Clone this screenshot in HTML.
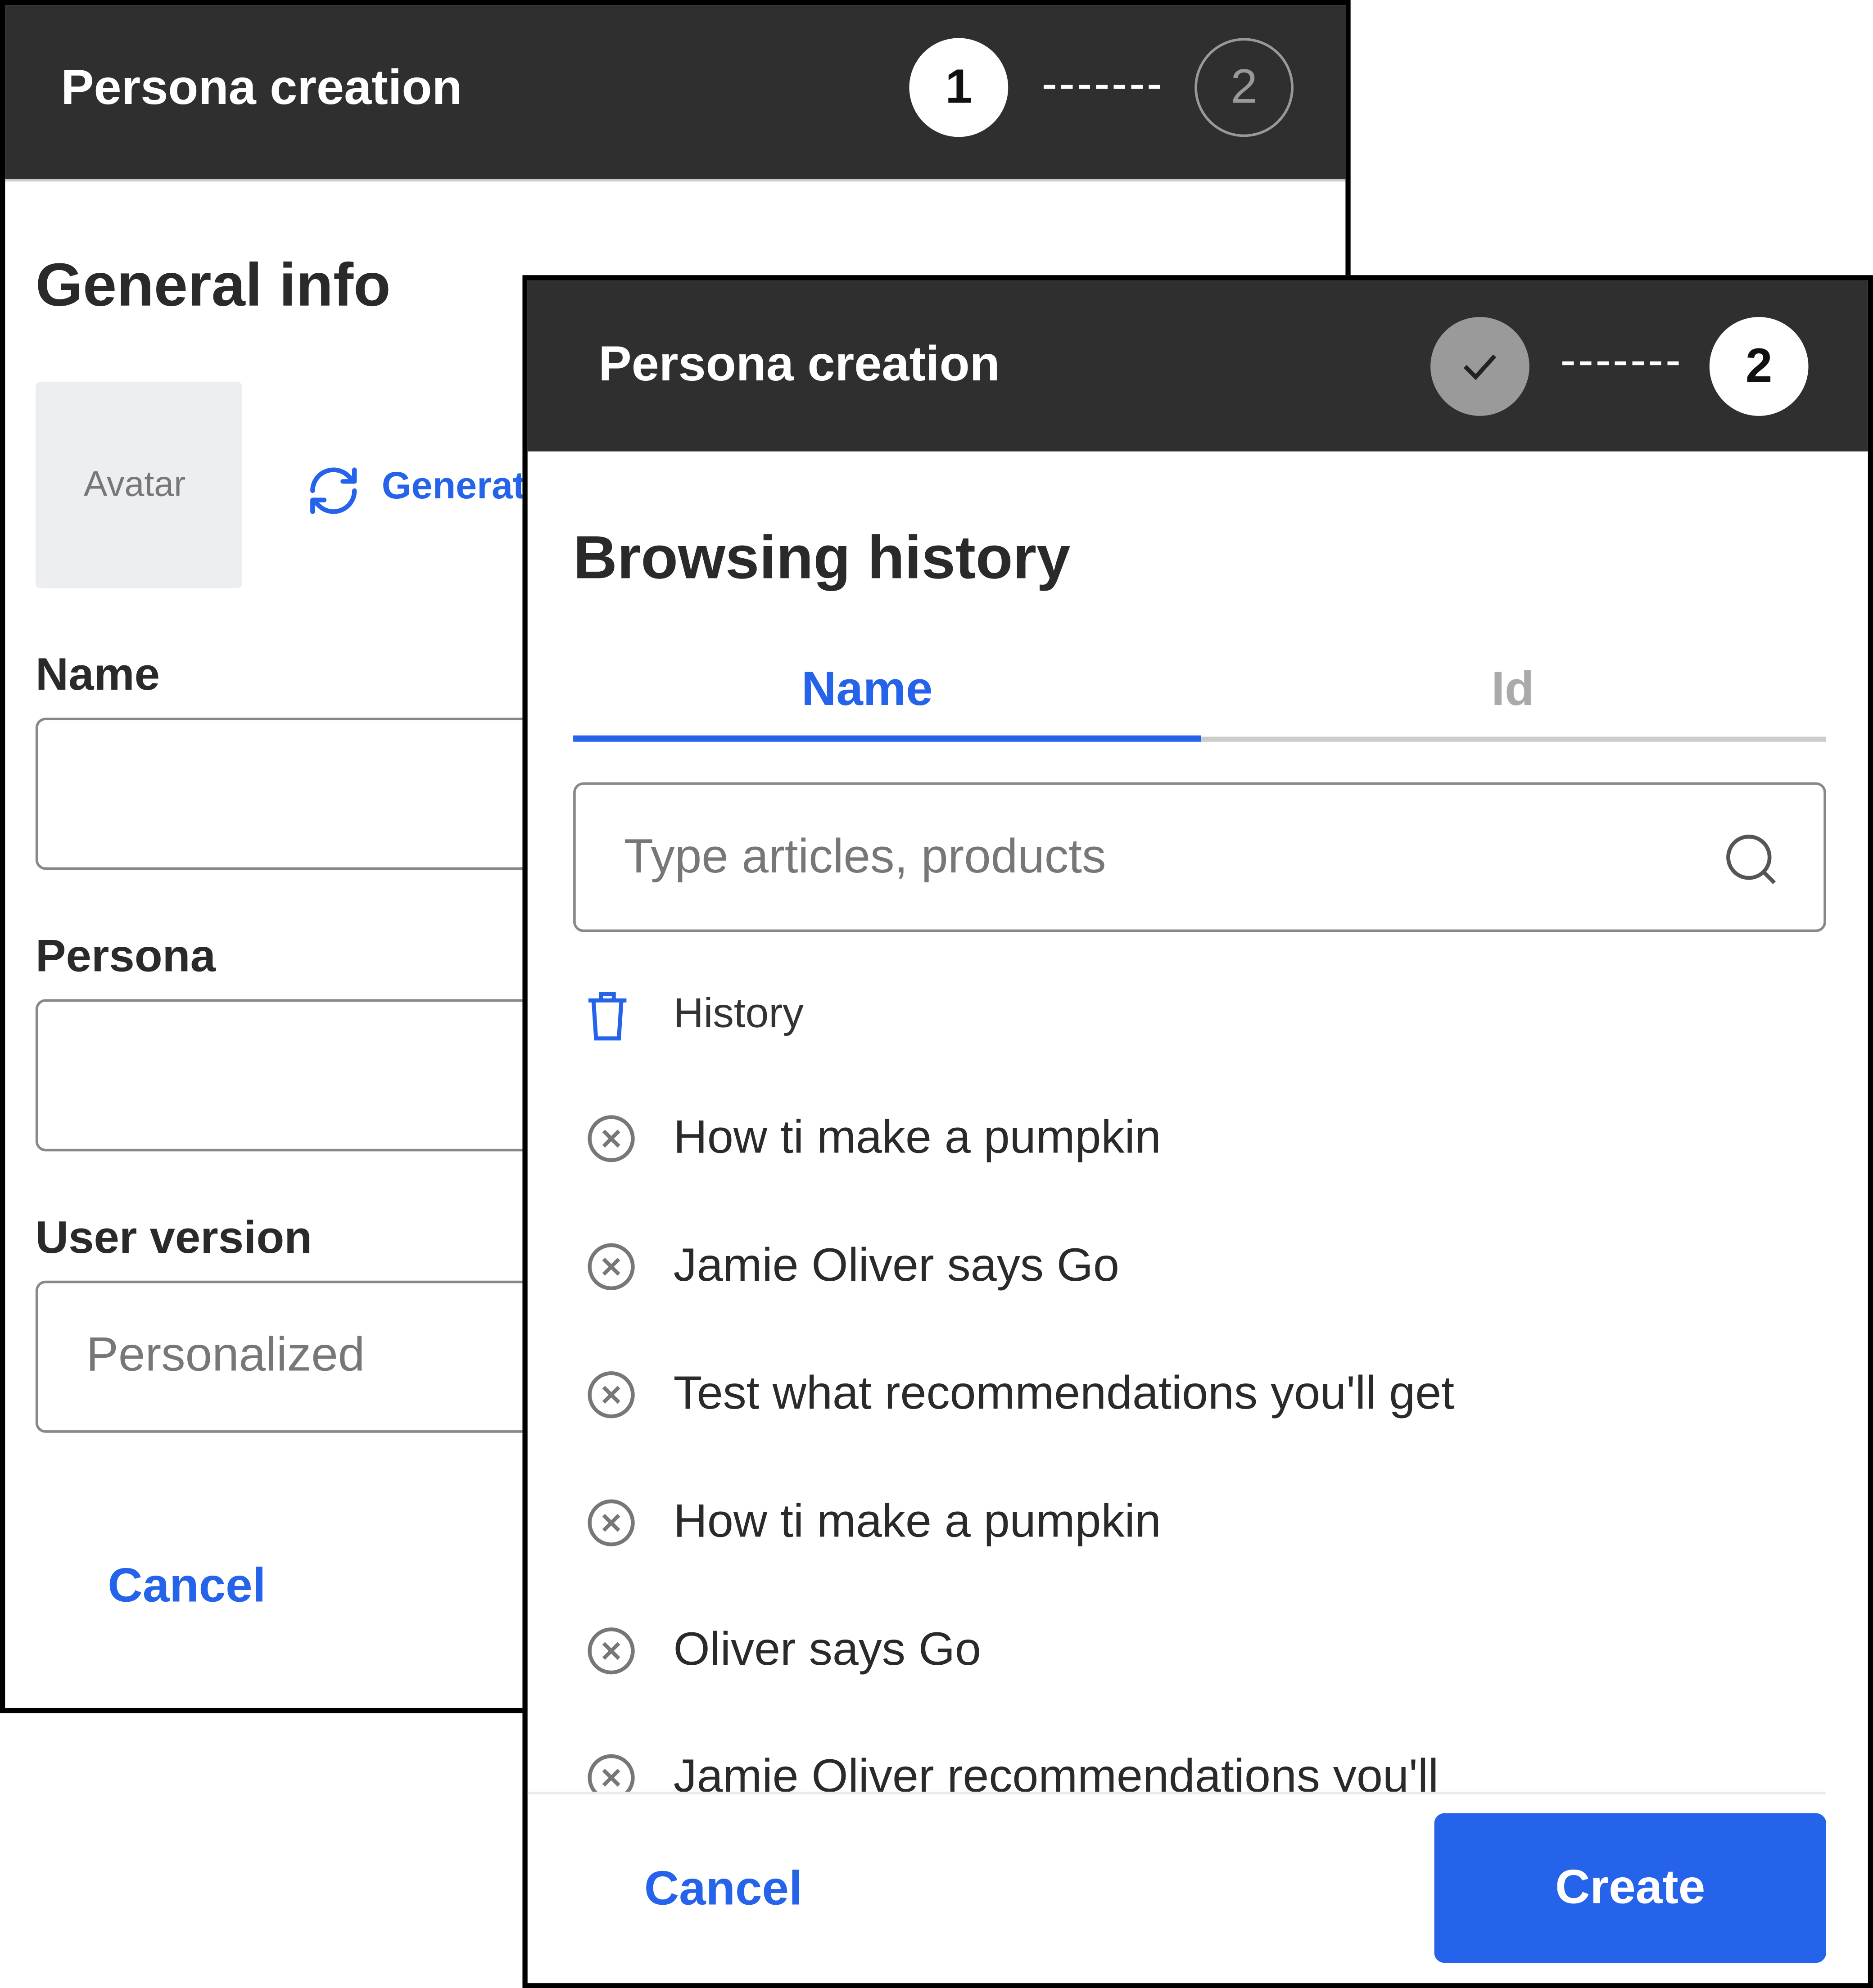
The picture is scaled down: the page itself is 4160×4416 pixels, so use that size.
<!DOCTYPE html>
<html><head><meta charset="utf-8"><style>
*{margin:0;padding:0;box-sizing:border-box}
html,body{width:4160px;height:4416px;background:#fff;overflow:hidden}
#s{position:absolute;left:0;top:0;width:1477px;height:1568px;transform:scale(2.8166);transform-origin:0 0;font-family:"Liberation Sans",Arial,sans-serif}
.a{position:absolute}
.card{position:absolute;border:4px solid #000;background:#fff;overflow:hidden}
.hd{position:absolute;left:0;top:0;right:0;background:#2f2f2f;border-bottom:2px solid #ccc}
.t{white-space:nowrap;line-height:1}
.ht{color:#fff;font-weight:bold;font-size:39px}
.circ{position:absolute;width:78px;height:78px;border-radius:50%;display:flex;align-items:center;justify-content:center;font-size:38px;font-weight:bold}
.dash{position:absolute;height:3px;width:92px;background:repeating-linear-gradient(90deg,#fff 0 9px,transparent 9px 13.8px)}
.lbl{font-size:36px;font-weight:bold;color:#2a2a2a}
.inp{position:absolute;border:2px solid #888;border-radius:8px;background:#fff}
.blue{color:#2563eb}
.it{font-size:37px;color:#2a2a2a}
</style></head><body><div id="s">
<div class="card" style="left:0;top:0;width:1065px;height:1351px">
 <div class="hd" style="height:139px">
  <div class="a t ht" style="left:44px;top:46px">Persona creation</div>
  <div class="circ" style="left:713px;top:26px;background:#fff;color:#111">1</div>
  <div class="dash" style="left:819px;top:63px"></div>
  <div class="circ" style="left:938px;top:26px;border:2px solid #999;color:#999;font-weight:normal">2</div>
 </div>
 <div class="a t" style="left:24px;top:198px;font-size:48px;font-weight:bold;color:#2a2a2a">General info</div>
 <div class="a" style="left:24px;top:297px;width:163px;height:163px;background:#eceef2;border-radius:4px"></div>
 <div class="a t" style="left:62px;top:364px;font-size:28px;color:#777">Avatar</div>
 <svg class="a" style="left:236px;top:361px" width="46" height="44" viewBox="0 0 24 24" fill="none" stroke="#2563eb" stroke-width="2" stroke-linecap="round" stroke-linejoin="round"><path d="M3 12a9 9 0 0 1 15.5-6.2L21 8M21 3v5h-5M21 12a9 9 0 0 1-15.5 6.2L3 16M3 21v-5h5"/></svg>
 <div class="a t blue" style="left:297px;top:365px;font-size:30px;font-weight:bold">Generate</div>
 <div class="a t lbl" style="left:24px;top:510px">Name</div>
 <div class="inp" style="left:24px;top:562px;width:600px;height:120px"></div>
 <div class="a t lbl" style="left:24px;top:732px">Persona</div>
 <div class="inp" style="left:24px;top:784px;width:600px;height:120px"></div>
 <div class="a t lbl" style="left:24px;top:954px">User version</div>
 <div class="inp" style="left:24px;top:1006px;width:600px;height:120px"></div>
 <div class="a t" style="left:64px;top:1046px;font-size:38px;color:#777">Personalized</div>
 <div class="a t blue" style="left:81px;top:1228px;font-size:38px;font-weight:bold">Cancel</div>
</div>
<div class="card" style="left:412px;top:217px;width:1065px;height:1351px">
 <div class="hd" style="height:135px;border-bottom:none">
  <div class="a t ht" style="left:56px;top:47px">Persona creation</div>
  <div class="circ" style="left:712px;top:29px;background:#9a9a9a"><svg width="40" height="40" viewBox="0 0 24 24" fill="none" stroke="#222" stroke-width="2"><path d="M5 12l5 5 9-10"/></svg></div>
  <div class="dash" style="left:816px;top:64px"></div>
  <div class="circ" style="left:932px;top:29px;background:#fff;color:#111">2</div>
 </div>
 <div class="a t" style="left:36px;top:196px;font-size:48px;font-weight:bold;color:#2a2a2a">Browsing history</div>
 <div class="a t blue" style="left:216px;top:304px;font-size:38px;font-weight:bold">Name</div>
 <div class="a t" style="left:760px;top:304px;font-size:38px;font-weight:bold;color:#aaa">Id</div>
 <div class="a" style="left:36px;top:359px;width:495px;height:5px;background:#2563eb"></div>
 <div class="a" style="left:531px;top:360px;width:493px;height:4px;background:#ccc"></div>
 <div class="inp" style="left:36px;top:396px;width:988px;height:118px"></div>
 <div class="a t" style="left:76px;top:436px;font-size:38px;color:#777">Type articles, products</div>
 <svg class="a" style="left:942px;top:434px" width="46" height="46" viewBox="0 0 24 24" fill="none" stroke="#555" stroke-width="1.6"><circle cx="11" cy="11" r="8.5"/><path d="M17 17l4.5 4.5"/></svg>
 <div class="a" style="left:0;top:540px;width:1057px;height:654px;overflow:hidden">
  <svg class="a" style="left:46px;top:20px" width="34" height="40" viewBox="0 0 17 20" fill="none" stroke="#2563eb" stroke-width="1.6"><path d="M1 4h15M6 4V1.5h5V4M3 4l1 15h9l1-15"/></svg>
  <div class="a t" style="left:115px;top:21px;font-size:33px;color:#333">History</div>
  <div class="a" style="left:0;top:117px">
   <svg class="a" style="left:46px;top:0" width="40" height="40" viewBox="0 0 20 20" fill="none" stroke="#777" stroke-width="1.5"><circle cx="10" cy="10" r="8.5"/><path d="M7 7l6 6M13 7l-6 6"/></svg>
   <div class="a t it" style="left:115px;top:0">How ti make a pumpkin</div></div>
  <div class="a" style="left:0;top:218px">
   <svg class="a" style="left:46px;top:0" width="40" height="40" viewBox="0 0 20 20" fill="none" stroke="#777" stroke-width="1.5"><circle cx="10" cy="10" r="8.5"/><path d="M7 7l6 6M13 7l-6 6"/></svg>
   <div class="a t it" style="left:115px;top:0">Jamie Oliver says Go</div></div>
  <div class="a" style="left:0;top:319px">
   <svg class="a" style="left:46px;top:0" width="40" height="40" viewBox="0 0 20 20" fill="none" stroke="#777" stroke-width="1.5"><circle cx="10" cy="10" r="8.5"/><path d="M7 7l6 6M13 7l-6 6"/></svg>
   <div class="a t it" style="left:115px;top:0">Test what recommendations you'll get</div></div>
  <div class="a" style="left:0;top:420px">
   <svg class="a" style="left:46px;top:0" width="40" height="40" viewBox="0 0 20 20" fill="none" stroke="#777" stroke-width="1.5"><circle cx="10" cy="10" r="8.5"/><path d="M7 7l6 6M13 7l-6 6"/></svg>
   <div class="a t it" style="left:115px;top:0">How ti make a pumpkin</div></div>
  <div class="a" style="left:0;top:521px">
   <svg class="a" style="left:46px;top:0" width="40" height="40" viewBox="0 0 20 20" fill="none" stroke="#777" stroke-width="1.5"><circle cx="10" cy="10" r="8.5"/><path d="M7 7l6 6M13 7l-6 6"/></svg>
   <div class="a t it" style="left:115px;top:0">Oliver says Go</div></div>
  <div class="a" style="left:0;top:621px">
   <svg class="a" style="left:46px;top:0" width="40" height="40" viewBox="0 0 20 20" fill="none" stroke="#777" stroke-width="1.5"><circle cx="10" cy="10" r="8.5"/><path d="M7 7l6 6M13 7l-6 6"/></svg>
   <div class="a t it" style="left:115px;top:0">Jamie Oliver recommendations you'll</div></div>
 </div>
 <div class="a" style="left:0;top:1192px;width:1024px;height:2px;background:#e8eaee"></div>
 <div class="a t blue" style="left:92px;top:1250px;font-size:38px;font-weight:bold">Cancel</div>
 <div class="a" style="left:715px;top:1209px;width:309px;height:118px;background:#2563eb;border-radius:8px;display:flex;align-items:center;justify-content:center;color:#fff;font-size:38px;font-weight:bold">Create</div>
</div>
</div></body></html>
